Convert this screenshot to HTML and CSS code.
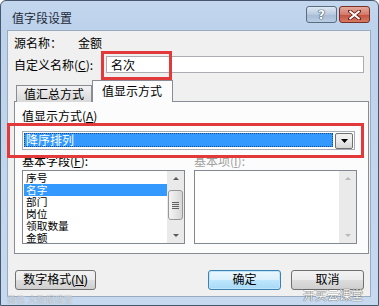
FILE: index.html
```html
<!DOCTYPE html>
<html lang="zh-CN">
<head>
    <meta charset="UTF-8">
    <title>值字段设置</title>
    <link rel="stylesheet" href="styles.css">
</head>
<body>
    <div class="window">
        <!-- title bar -->
        <div class="titlebar">
            <span class="title">值字段设置</span>
            <div class="caption-buttons">
                <div class="cap-btn help">?</div>
                <div class="cap-btn close">
                    <svg width="13" height="10" viewBox="0 0 13 10">
                        <path d="M1.5 1 L11.5 9 M11.5 1 L1.5 9" stroke="#6b2218" stroke-width="3.6" stroke-linecap="square"/>
                        <path d="M1.5 1 L11.5 9 M11.5 1 L1.5 9" stroke="#fff" stroke-width="2"/>
                    </svg>
                </div>
            </div>
        </div>

        <!-- client area -->
        <div class="client">
            <div class="row source">
                <span>源名称：</span><span class="source-name">金额</span>
            </div>
            <div class="row custom">
                <span class="custom-label">自定义名称(<u>C</u>):</span>
                <div class="textbox">名次</div>
            </div>

            <div class="tabs">
                <div class="tab">值汇总方式</div>
                <div class="tab active">值显示方式</div>
            </div>
            <div class="panel">
                <div class="label">值显示方式(<u>A</u>)</div>
                <div class="combo">
                    <div class="combo-value"><span>降序排列</span></div>
                    <div class="combo-btn">
                        <svg width="7" height="4" viewBox="0 0 7 4"><path d="M0 0 H7 L3.5 4 Z" fill="#000"/></svg>
                    </div>
                </div>
                <div class="lists">
                    <div class="list-col">
                        <div class="label">基本字段(<u>F</u>):</div>
                        <div class="listbox">
                            <div class="items">
                                <div class="item">序号</div>
                                <div class="item selected">名字</div>
                                <div class="item">部门</div>
                                <div class="item">岗位</div>
                                <div class="item">领取数量</div>
                                <div class="item">金额</div>
                            </div>
                            <div class="scrollbar">
                                <div class="arrow up"></div>
                                <div class="track"><div class="thumb"><i></i><i></i><i></i><i></i></div></div>
                                <div class="arrow down"></div>
                            </div>
                        </div>
                    </div>
                    <div class="list-col right">
                        <div class="label dim">基本项(<u>I</u>):</div>
                        <div class="listbox">
                            <div class="items"></div>
                            <div class="scrollbar empty">
                                <div class="arrow up"></div>
                                <div class="track"></div>
                                <div class="arrow down"></div>
                            </div>
                        </div>
                    </div>
                </div>
            </div>

            <div class="buttons">
                <div class="button">数字格式(<u>N</u>)</div>
                <div class="spacer"></div>
                <div class="button default">确定</div>
                <div class="button">取消</div>
            </div>

            <!-- red highlight boxes drawn over the dialog -->
            <div class="mark mark-name"></div>
            <div class="mark mark-combo"></div>
        </div>

        <div class="watermark left">微信 大数据课堂</div>
        <div class="watermark right">开买云课堂</div>
    </div>
</body>
</html>
```

FILE: styles.css
```css
/* whole page is just the dialog */

html,
body {
    margin: 0;
    padding: 0;
    background: #fff;
    font-family: "Noto Sans CJK SC", "Liberation Sans", sans-serif;
    font-size: 12px;
    color: #000;
}

u {
    text-decoration: underline;
}

/* window frame */

.window {
    position: relative;
    width: 377px;
    height: 304px;
    border: 1px solid #46586e;
    border-radius: 6px 6px 0 0;
    background: linear-gradient(#c3d6ee, #bdd2eb 30px, #c6d9ef);
    display: flex;
    flex-direction: column;
    overflow: hidden;
}

.titlebar {
    height: 28px;
    display: flex;
    align-items: center;
    padding: 0 8px 0 11px;
}

.title {
    font-size: 12px;
    line-height: 14px;
    margin-top: 6px;
    color: #1e2a38;
}

.caption-buttons {
    margin-left: auto;
    display: flex;
    gap: 2px;
    margin-top: -1px;
}

.cap-btn {
    height: 15px;
    border: 1px solid #5b6b80;
    border-radius: 3px;
    display: flex;
    align-items: center;
    justify-content: center;
}

.help {
    width: 29px;
    background: linear-gradient(#dfe8f3, #b7c9de 50%, #a6bbd4 51%, #b9cde3);
    color: #fff;
    font-weight: bold;
    font-size: 12px;
    font-family: "DejaVu Sans", sans-serif;
    text-shadow: 0 0 1px #34465c, 0 0 1px #34465c, 0 0 1px #34465c;
}

.close {
    width: 29px;
    border-color: #7a2f25;
    background: linear-gradient(#e4a99e, #d47a6a 50%, #c2503f 51%, #d77a62);
}

/* client area */

.client {
    position: relative;
    flex: 1;
    margin: 1px 7px 8px 6px;
    border: 1px solid #9aabc0;
    background: #f0f0f0;
    display: flex;
    flex-direction: column;
    padding: 0 0 0 6px;
}

.row {
    display: flex;
    align-items: center;
    line-height: 16px;
}

.source {
    margin-top: 4px;
}

.source-name {
    margin-left: 16px;
}

.custom {
    margin-top: 5px;
}

.custom-label {
    width: 92px;
}

.textbox {
    flex: 1;
    height: 15px;
    margin-right: 6px;
    border: 1px solid #abadb3;
    background: #fff;
    line-height: 15px;
    padding-left: 4px;
}

/* tabs */

.tabs {
    display: flex;
    align-items: flex-end;
    margin-top: 7px;
    padding-left: 2px;
    height: 21px;
    position: relative;
    z-index: 1;
}

.tab {
    height: 16px;
    line-height: 16px;
    padding: 0 7px 0 7px;
    border: 1px solid #898c95;
    border-bottom: none;
    background: linear-gradient(#f3f3f3, #e4e4e4 50%, #d9d9d9);
    margin-bottom: -1px;
}

.tab.active {
    height: 20px;
    line-height: 20px;
    padding: 0 10px 1px 9px;
    background: #fcfcfc;
    margin-bottom: -1px;
}

.panel {
    width: 340px;
    height: 151px;
    border: 1px solid #898c95;
    background: #fcfcfc;
    padding: 0 6px 0 7px;
}

.label {
    line-height: 14px;
    margin-top: 7px;
}

.label.dim {
    color: #a0a0a0;
}

/* dropdown */

.combo {
    margin-top: 8px;
    width: 331px;
    height: 17px;
    border: 1px solid #a5acb5;
    background: #fff;
    display: flex;
}

.combo-value {
    flex: 1;
    padding: 2px 0 0 2px;
}

.combo-value span {
    display: block;
    height: 12px;
    line-height: 12px;
    background: #3399ff;
    color: #fff;
    border: 1px dotted #1a4a80;
    margin: -1px 0 0 -1px;
    padding-left: 1px;
}

.combo-btn {
    width: 16px;
    margin: 1px 1px 0 2px;
    height: 14px;
    border: 1px solid #707070;
    border-radius: 2px;
    background: linear-gradient(#f2f2f2, #ebebeb 50%, #d6d6d6);
    display: flex;
    align-items: center;
    justify-content: center;
}

/* list boxes */

.lists {
    display: flex;
    gap: 9px;
}

.list-col {
    width: 163px;
}

.list-col .label {
    margin-top: 4px;
}

.listbox {
    margin-top: 2px;
    height: 72px;
    border: 1px solid #828790;
    background: #fff;
    display: flex;
}

.items {
    flex: 1;
    padding: 1px 0 0 1px;
}

.item {
    height: 12px;
    line-height: 12px;
    font-family: "Liberation Sans", "Noto Sans CJK SC", sans-serif;
    font-size: 10.7px;
    padding-left: 2px;
}

.item.selected {
    background: #3399ff;
    color: #fff;
}

.scrollbar {
    width: 17px;
    background: #eaeaea;
    display: flex;
    flex-direction: column;
}

.arrow {
    height: 16px;
    position: relative;
}

.arrow::after {
    content: "";
    position: absolute;
    left: 6px;
    border-left: 3px solid transparent;
    border-right: 3px solid transparent;
}

.arrow.up::after {
    top: 6px;
    border-bottom: 3px solid #5a5a5a;
}

.arrow.down::after {
    top: 7px;
    border-top: 3px solid #5a5a5a;
}

.empty .arrow.up::after {
    border-bottom-color: #b8b8b8;
}

.empty .arrow.down::after {
    border-top-color: #b8b8b8;
}

.track {
    flex: 1;
    padding-top: 3px;
}

.thumb {
    height: 28px;
    margin: 0 1px;
    border: 1px solid #979797;
    border-radius: 3px;
    background: linear-gradient(90deg, #f4f4f4, #e6e6e6 50%, #d6d6d6);
    display: flex;
    flex-direction: column;
    align-items: center;
    justify-content: center;
    gap: 1px;
}

.thumb i {
    display: block;
    width: 7px;
    height: 1px;
    background: #606060;
}

/* bottom buttons */

.buttons {
    display: flex;
    margin-top: 16px;
    padding-right: 6px;
    gap: 10px;
}

.spacer {
    flex: 1;
}

.button {
    width: 71px;
    height: 18px;
    line-height: 18px;
    text-align: center;
    font-family: "Liberation Sans", "Noto Sans CJK SC", sans-serif;
    border: 1px solid #707070;
    border-radius: 3px;
    background: linear-gradient(#f2f2f2, #ebebeb 50%, #dddddd 51%, #cfcfcf);
}

.button:first-child {
    width: 79px;
    margin-left: 1px;
}

.button.default {
    border-color: #3c7fb1;
    box-shadow: inset 0 0 0 1px #bfe5fa;
    background: linear-gradient(#eaf6fd, #d9f0fc 50%, #bee6fd 51%, #a7d9f5);
}

/* red annotation rectangles */

.mark {
    position: absolute;
    border: 3px solid #e23a3a;
}

.mark-name {
    left: 93px;
    top: 20px;
    width: 65px;
    height: 23px;
}

.mark-combo {
    left: -1px;
    top: 92px;
    width: 351px;
    height: 29px;
}

/* faint watermark text */

.watermark {
    position: absolute;
    line-height: 12px;
    font-family: "Liberation Sans", "Noto Sans CJK SC", sans-serif;
}

.watermark.left {
    left: 6px;
    top: 294px;
    font-size: 9px;
    line-height: 10px;
    color: rgba(255, 255, 255, 0.6);
    text-shadow: 0 0 1px #7d8a99;
}

.watermark.right {
    left: 302px;
    top: 289px;
    font-size: 12px;
    color: #fff;
    text-shadow: 0 0 1px #444, 0 0 1px #444;
}
```
